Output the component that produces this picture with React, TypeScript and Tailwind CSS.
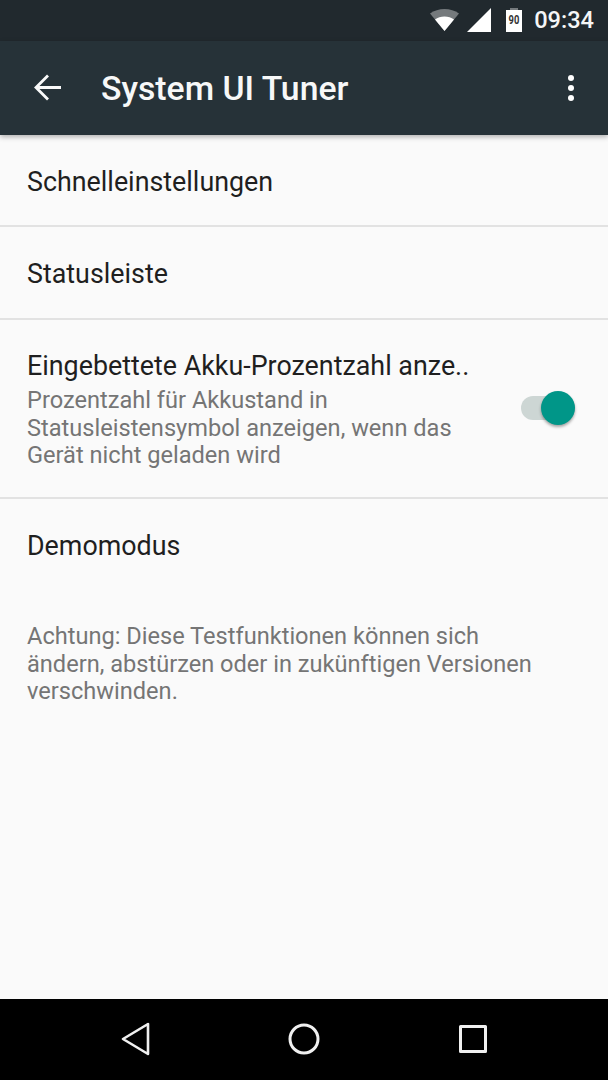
export default function App() {
  const Row = ({ t, c }: { t: string; c: string }) => (
    <div className={`${c} flex items-center px-[27px] border-b-2 border-[#e2e2e2] text-[26.85px] text-[#1f1f1f]`}>{t}</div>
  );
  return (
    <div className="w-[608px] h-[1080px] flex flex-col bg-[#fafafa] overflow-hidden" style={{ fontFamily: "Roboto, sans-serif" }}>
      <div className="h-[41px] bg-[#21292e] flex items-center justify-end shrink-0 relative">
        <svg width="32" height="24" viewBox="0 0 32 24" className="absolute left-[429px] top-[8px]">
          <path d="M1 5.5 C9 -0.5 22 -0.5 30 5.5 L15.5 23 Z" fill="#757a7d" />
          <path d="M6 11.5 C11 7.5 20 7.5 25 11.5 L15.5 23 Z" fill="#ffffff" />
        </svg>
        <svg width="26" height="26" viewBox="0 0 26 26" className="absolute left-[466px] top-[7px]">
          <path d="M1 25 L25 1 V25 Z" fill="#ffffff" />
        </svg>
        <svg width="18" height="26" viewBox="0 0 18 26" className="absolute left-[505px] top-[7px]">
          <path d="M5 1 H13 V3 H5 Z" fill="#757a7d" />
          <path d="M1 3 H17 V25 H1 Z" fill="#ffffff" />
        </svg>
        <span className="absolute left-[505px] top-[14px] w-[18px] text-center text-[13px] leading-[12px] font-bold text-[#333]" style={{ transform: "scaleX(0.72)" }}>90</span>
        <span className="mr-[14px] text-[23.6px] font-medium text-[#f5f6f6]">09:34</span>
      </div>
      <div className="h-[94px] bg-[#263238] flex items-center shrink-0 relative z-10 shadow-[0_2px_5px_rgba(0,0,0,0.3)]">
        <svg width="30" height="28" viewBox="0 0 30 28" className="ml-[33px]" fill="none" stroke="#fafafa" strokeWidth="2.8">
          <path d="M28 13.5 H3 M15 1.5 L3 13.5 L15 25.5" />
        </svg>
        <span className="ml-[38px] pt-[3px] text-[33.75px] font-medium text-[#f7f8f8]">System UI Tuner</span>
        <div className="ml-auto mr-[34px] flex flex-col gap-[4px]">
          <div className="w-[6px] h-[6px] rounded-full bg-white" />
          <div className="w-[6px] h-[6px] rounded-full bg-white" />
          <div className="w-[6px] h-[6px] rounded-full bg-white" />
        </div>
      </div>
      <div className="flex-1 flex flex-col">
        <Row t="Schnelleinstellungen" c="h-[92px] pt-[5px]" />
        <Row t="Statusleiste" c="h-[93px] pt-[3px]" />
        <div className="h-[179px] flex items-center pl-[27px] pr-[33px] border-b-2 border-[#e2e2e2]">
          <div className="flex-1 pt-[3px]">
            <div className="text-[26.85px] leading-[33px] text-[#1f1f1f]">Eingebettete Akku-Prozentzahl anze..</div>
            <div className="text-[23.6px] leading-[27.5px] text-[#757575] mt-[4px]">
              Prozentzahl für Akkustand in<br />Statusleistensymbol anzeigen, wenn das<br />Gerät nicht geladen wird
            </div>
          </div>
          <div className="relative w-[54px] h-[24px] mb-[2px] rounded-full bg-[#cdd6d4] shrink-0">
            <div className="absolute right-0 top-[-5px] w-[34px] h-[34px] rounded-full bg-[#009688] shadow-[0_2px_3px_rgba(0,0,0,0.35)]" />
          </div>
        </div>
        <div className="h-[93px] flex items-center px-[27px] pt-[1px] text-[26.85px] text-[#1f1f1f]">Demomodus</div>
        <div className="px-[27px] mt-[31px] text-[23.6px] leading-[27.5px] text-[#757575]">
          Achtung: Diese Testfunktionen können sich<br />ändern, abstürzen oder in zukünftigen Versionen<br />verschwinden.
        </div>
      </div>
      <div className="h-[81px] bg-black shrink-0 flex items-center relative">
        <svg width="30" height="34" viewBox="0 0 30 34" className="absolute left-[121px] top-[23px]" fill="none" stroke="#f0f0f0" strokeWidth="2.6" strokeLinejoin="round">
          <path d="M27 2 V32 L2 17 Z" />
        </svg>
        <svg width="32" height="32" viewBox="0 0 32 32" className="absolute left-[288px] top-[24px]" fill="none" stroke="#f0f0f0" strokeWidth="3">
          <circle cx="16" cy="16" r="14" />
        </svg>
        <svg width="28" height="28" viewBox="0 0 28 28" className="absolute left-[459px] top-[26px]" fill="none" stroke="#f0f0f0" strokeWidth="3" strokeLinejoin="round">
          <rect x="1.5" y="1.5" width="25" height="25" />
        </svg>
      </div>
    </div>
  );
}
